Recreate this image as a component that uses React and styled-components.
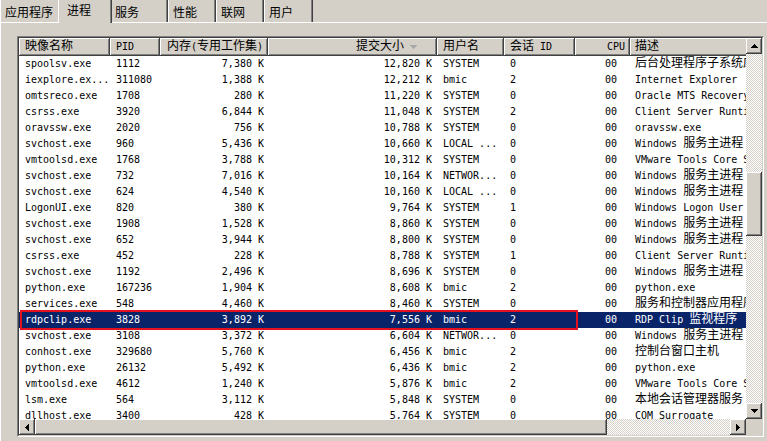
import React from "react";
import styled, { createGlobalStyle, css } from "styled-components";

const FACE = "#d4d0c8";

const GlobalStyle = createGlobalStyle`
  html, body {
    margin: 0;
    padding: 0;
    background: ${FACE};
  }
`;

const raised = css`
  background: ${FACE};
  box-shadow: inset -1px -1px #404040, inset 1px 1px #fff,
    inset -2px -2px #808080;
`;

const Window = styled.div`
  width: 767px;
  height: 441px;
  display: flex;
  flex-direction: column;
  overflow: hidden;
  background: ${FACE};
  color: #000;
  font-family: "DejaVu Sans Mono", "Liberation Mono", monospace;
  font-size: 10px;
`;

const TabStrip = styled.div`
  display: flex;
  align-items: flex-end;
  height: 22px;
  flex: none;
`;

const Tab = styled.div`
  position: relative;
  box-sizing: border-box;
  width: ${(p) => p.$w}px;
  height: 24px;
  padding: 5px 0 0 4px;
  border-top: 1px solid #fff;
  border-left: 1px solid #fff;
  border-right: 1px solid #404040;
  box-shadow: inset -1px 0 #808080;
  background: ${FACE};
  font: 12px/16px "Noto Sans CJK SC", sans-serif;
  white-space: nowrap;

  ${(p) =>
    p.$active &&
    css`
      z-index: 1;
      width: ${p.$w + 4}px;
      height: 25px;
      margin: 0 -2px -1px;
      padding: 3px 0 0 8px;
    `}
`;

const Panel = styled.div`
  flex: 1;
  border-top: 1px solid #fff;
  border-left: 1px solid #fff;
  padding: 13px 0 0 16px;
`;

const ListFrame = styled.div`
  box-sizing: border-box;
  width: 747px;
  height: 401px;
  border: 1px solid;
  border-color: #808080 #fff #fff #808080;
`;

const ListInner = styled.div`
  box-sizing: border-box;
  height: 100%;
  border: 1px solid;
  border-color: #404040 ${FACE} ${FACE} #404040;
  display: grid;
  grid-template-columns: 1fr 16px;
  grid-template-rows: 1fr 16px;
  background: #fff;
`;

const Viewport = styled.div`
  overflow: hidden;
  background: #fff;
`;

const HeaderRow = styled.div`
  display: flex;
  height: 18px;
`;

const HeadCell = styled.div`
  ${raised};
  flex: none;
  box-sizing: border-box;
  width: ${(p) => p.$w}px;
  height: 18px;
  display: flex;
  align-items: center;
  justify-content: ${(p) => (p.$right ? "flex-end" : "flex-start")};
  gap: 6px;
  padding: 0 ${(p) => p.$pr}px 0 ${(p) => p.$pl}px;
  line-height: 16px;
  white-space: nowrap;
`;

const Row = styled.div`
  position: relative;
  display: flex;
  height: 16px;
  line-height: 16px;
  background: ${(p) => (p.$sel ? "#0a246a" : "transparent")};
  color: ${(p) => (p.$sel ? "#fff" : "#000")};
`;

const Cell = styled.div`
  flex: none;
  box-sizing: border-box;
  width: ${(p) => p.$w}px;
  height: 16px;
  padding: 0 ${(p) => p.$pr}px 0 ${(p) => p.$pl}px;
  text-align: ${(p) => (p.$right ? "right" : "left")};
  white-space: nowrap;
`;

const Mark = styled.div`
  position: absolute;
  left: 1px;
  top: -2px;
  width: 558px;
  height: 20px;
  box-sizing: border-box;
  border: 2px solid #e3101e;
  z-index: 2;
`;

const Han = styled.span`
  font-family: "Noto Sans CJK SC", sans-serif;
  font-size: 12px;
  line-height: 12px;
`;

const VScroll = styled.div`
  display: flex;
  flex-direction: column;
`;

const HScroll = styled.div`
  display: flex;
`;

const Track = styled.div`
  flex: 1;
  display: flex;
  flex-direction: ${(p) => (p.$vertical ? "column" : "row")};
  background-color: ${FACE};
  background-image: repeating-conic-gradient(#fff 0% 25%, transparent 0% 50%);
  background-size: 2px 2px;
`;

const ScrollButton = styled.div`
  ${raised};
  flex: none;
  width: 16px;
  height: 16px;
  display: flex;
  align-items: center;
  justify-content: center;
`;

const Thumb = styled.div`
  ${raised};
  flex: none;
  ${(p) =>
    p.$vertical
      ? css`
          margin-top: ${p.$offset}px;
          height: ${p.$size}px;
        `
      : css`
          margin-left: ${p.$offset}px;
          width: ${p.$size}px;
        `}
`;

const Corner = styled.div`
  background: ${FACE};
`;

const ARROWS = {
  up: "M3 0h1v1h-1zM2 1h3v1h-3zM1 2h5v1h-5zM0 3h7v1h-7z",
  down: "M0 0h7v1h-7zM1 1h5v1h-5zM2 2h3v1h-3zM3 3h1v1h-1z",
  left: "M3 0h1v7h-1zM2 1h1v5h-1zM1 2h1v3h-1zM0 3h1v1h-1z",
  right: "M0 0h1v7h-1zM1 1h1v5h-1zM2 2h1v3h-1zM3 3h1v1h-1z",
};

const Arrow = ({ dir, color = "#000" }) => {
  const flat = dir === "up" || dir === "down";
  return (
    <svg
      width={flat ? 7 : 4}
      height={flat ? 4 : 7}
      viewBox={flat ? "0 0 7 4" : "0 0 4 7"}
      shapeRendering="crispEdges"
    >
      <path d={ARROWS[dir]} fill={color} />
    </svg>
  );
};

// latin text in a half-width mono, han characters in a full-width CJK face
const CJK = /([\u3000-\u9fff\uff00-\uffef]+)/;
const Txt = ({ children }) =>
  String(children)
    .split(CJK)
    .map((part, i) => (i % 2 ? <Han key={i}>{part}</Han> : part));

const TABS = [
  { label: "应用程序", w: 60 },
  { label: "进程", w: 50, active: true },
  { label: "服务", w: 58 },
  { label: "性能", w: 48 },
  { label: "联网", w: 48 },
  { label: "用户", w: 49 },
];

const COLS = [
  { key: "name", w: 91, head: "映像名称", pl: 6, pr: 2 },
  { key: "pid", w: 50, head: "PID", pl: 6, pr: 2 },
  { key: "mem", w: 108, head: "内存(专用工作集)", right: true, pl: 2, pr: 5, cellPr: 4 },
  { key: "commit", w: 169, head: "提交大小", right: true, sorted: true, pl: 2, pr: 20, cellPr: 5 },
  { key: "user", w: 67, head: "用户名", pl: 6, pr: 2 },
  { key: "sess", w: 71, head: "会话 ID", pl: 6, pr: 2 },
  { key: "cpu", w: 55, head: "CPU", right: true, pl: 2, pr: 5, cellPr: 13 },
  { key: "desc", w: 320, head: "描述", pl: 5, pr: 2 },
];

const ROWS = [
  ["spoolsv.exe", "1112", "7,380 K", "12,820 K", "SYSTEM", "0", "00", "后台处理程序子系统应用程序"],
  ["iexplore.ex...", "311080", "1,388 K", "12,212 K", "bmic", "2", "00", "Internet Explorer"],
  ["omtsreco.exe", "1708", "280 K", "11,220 K", "SYSTEM", "0", "00", "Oracle MTS Recovery Service"],
  ["csrss.exe", "3920", "6,844 K", "11,048 K", "SYSTEM", "2", "00", "Client Server Runtime Process"],
  ["oravssw.exe", "2020", "756 K", "10,788 K", "SYSTEM", "0", "00", "oravssw.exe"],
  ["svchost.exe", "960", "5,436 K", "10,660 K", "LOCAL ...", "0", "00", "Windows 服务主进程"],
  ["vmtoolsd.exe", "1768", "3,788 K", "10,312 K", "SYSTEM", "0", "00", "VMware Tools Core Service"],
  ["svchost.exe", "732", "7,016 K", "10,164 K", "NETWOR...", "0", "00", "Windows 服务主进程"],
  ["svchost.exe", "624", "4,540 K", "10,160 K", "LOCAL ...", "0", "00", "Windows 服务主进程"],
  ["LogonUI.exe", "820", "380 K", "9,764 K", "SYSTEM", "1", "00", "Windows Logon User Interface Host"],
  ["svchost.exe", "1908", "1,528 K", "8,860 K", "SYSTEM", "0", "00", "Windows 服务主进程"],
  ["svchost.exe", "652", "3,944 K", "8,800 K", "SYSTEM", "0", "00", "Windows 服务主进程"],
  ["csrss.exe", "452", "228 K", "8,788 K", "SYSTEM", "1", "00", "Client Server Runtime Process"],
  ["svchost.exe", "1192", "2,496 K", "8,696 K", "SYSTEM", "0", "00", "Windows 服务主进程"],
  ["python.exe", "167236", "1,904 K", "8,608 K", "bmic", "2", "00", "python.exe"],
  ["services.exe", "548", "4,460 K", "8,460 K", "SYSTEM", "0", "00", "服务和控制器应用程序"],
  ["rdpclip.exe", "3828", "3,892 K", "7,556 K", "bmic", "2", "00", "RDP Clip 监视程序"],
  ["svchost.exe", "3108", "3,372 K", "6,604 K", "NETWOR...", "0", "00", "Windows 服务主进程"],
  ["conhost.exe", "329680", "5,760 K", "6,456 K", "bmic", "2", "00", "控制台窗口主机"],
  ["python.exe", "26132", "5,492 K", "6,436 K", "bmic", "2", "00", "python.exe"],
  ["vmtoolsd.exe", "4612", "1,240 K", "5,876 K", "bmic", "2", "00", "VMware Tools Core Service"],
  ["lsm.exe", "564", "3,112 K", "5,848 K", "SYSTEM", "0", "00", "本地会话管理器服务"],
  ["dllhost.exe", "3400", "428 K", "5,764 K", "SYSTEM", "0", "00", "COM Surrogate"],
];

const SELECTED = 16;

export default function App() {
  return (
    <>
      <GlobalStyle />
      <Window>
        <TabStrip>
          {TABS.map((t) => (
            <Tab key={t.label} $w={t.w} $active={t.active}>
              {t.label}
            </Tab>
          ))}
        </TabStrip>

        <Panel>
          <ListFrame>
            <ListInner>
              <Viewport>
                <HeaderRow>
                  {COLS.map((c) => (
                    <HeadCell key={c.key} $w={c.w} $right={c.right} $pl={c.pl} $pr={c.pr}>
                      <span>
                        <Txt>{c.head}</Txt>
                      </span>
                      {c.sorted && <Arrow dir="down" color="#a8a8a8" />}
                    </HeadCell>
                  ))}
                </HeaderRow>

                {ROWS.map((r, i) => (
                  <Row key={i} $sel={i === SELECTED}>
                    {COLS.map((c, j) => (
                      <Cell
                        key={c.key}
                        $w={c.w}
                        $right={c.right}
                        $pl={c.pl}
                        $pr={c.cellPr ?? c.pr}
                      >
                        <Txt>{r[j]}</Txt>
                      </Cell>
                    ))}
                    {i === SELECTED && <Mark />}
                  </Row>
                ))}
              </Viewport>

              <VScroll>
                <ScrollButton>
                  <Arrow dir="up" />
                </ScrollButton>
                <Track $vertical>
                  <Thumb $vertical $offset={118} $size={64} />
                </Track>
                <ScrollButton>
                  <Arrow dir="down" />
                </ScrollButton>
              </VScroll>

              <HScroll>
                <ScrollButton>
                  <Arrow dir="left" />
                </ScrollButton>
                <Track>
                  <Thumb $offset={0} $size={572} />
                </Track>
                <ScrollButton>
                  <Arrow dir="right" />
                </ScrollButton>
              </HScroll>

              <Corner />
            </ListInner>
          </ListFrame>
        </Panel>
      </Window>
    </>
  );
}
